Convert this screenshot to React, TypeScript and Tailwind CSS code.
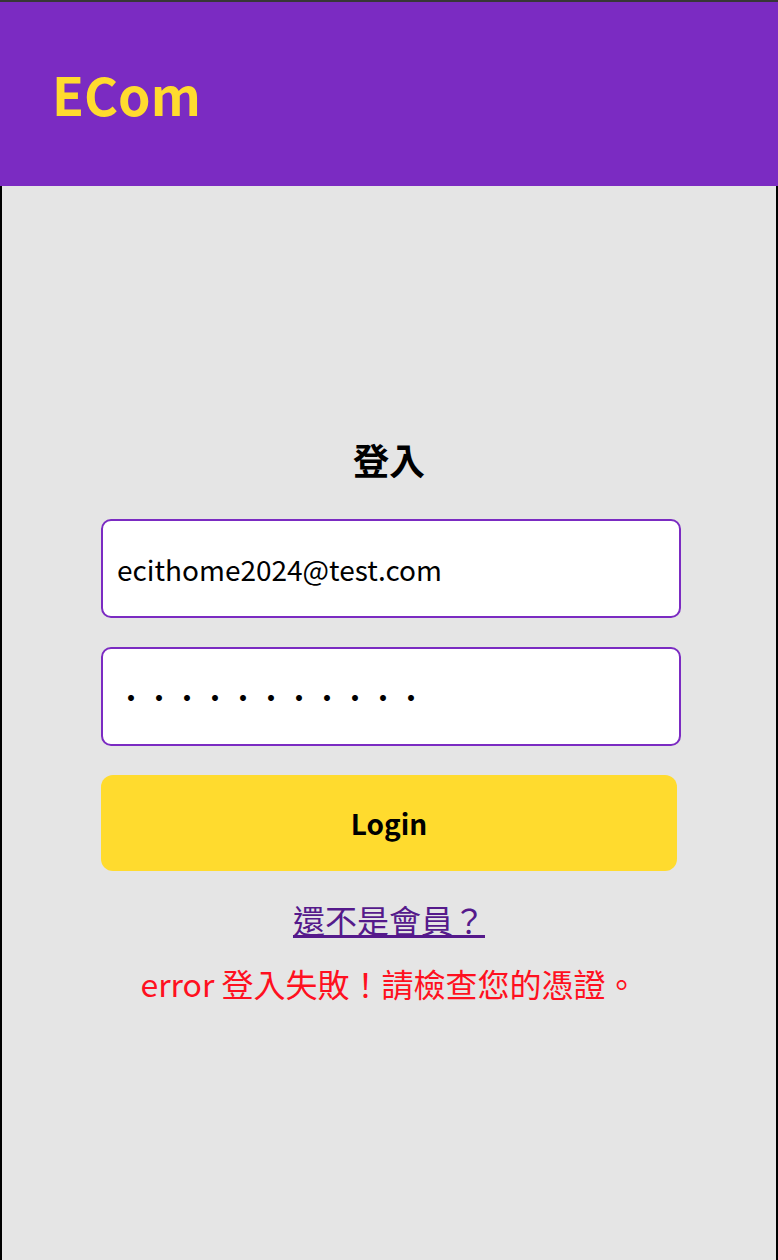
export default function App() {
  return (
    <div
      className="flex min-h-screen flex-col bg-[#e5e5e5]"
      style={{ fontFamily: '"Noto Sans CJK TC", "Noto Sans", sans-serif' }}
    >
      <div className="h-[2px] bg-[#373737]" />
      <header className="flex h-[184px] items-center bg-[#7b2bc2] px-[52px]">
        <h1 className="text-[52px] font-bold leading-none text-[#ffdb2e]">ECom</h1>
      </header>
      <main className="flex flex-1 flex-col items-center border-x-2 border-black pt-[255px]">
        <h2 className="text-[36px] font-bold leading-none text-black">登入</h2>
        <form className="mt-[42px] flex w-[576px] flex-col gap-[29px]" onSubmit={(e) => e.preventDefault()}>
          <input
            type="email"
            readOnly
            defaultValue="ecithome2024@test.com"
            className="h-[99px] w-[580px] rounded-[10px] border-2 border-[#7b2bc2] bg-white px-[14px] text-[28px] text-black outline-none"
          />
          <input
            type="password"
            readOnly
            defaultValue="ecithome202"
            className="h-[99px] w-[580px] rounded-[10px] border-2 border-[#7b2bc2] bg-white px-[14px] text-[28px] text-black outline-none"
          />
          <button
            type="submit"
            className="h-[96px] w-full rounded-[12px] bg-[#ffdb2e] text-[28px] font-bold text-black"
          >
            Login
          </button>
        </form>
        <a href="#" className="mt-[32px] text-[32px] leading-none text-[#551a8b] underline">
          還不是會員？
        </a>
        <p className="mt-[32px] text-[32px] leading-none text-[#ff1020]">error 登入失敗！請檢查您的憑證。</p>
      </main>
    </div>
  );
}
